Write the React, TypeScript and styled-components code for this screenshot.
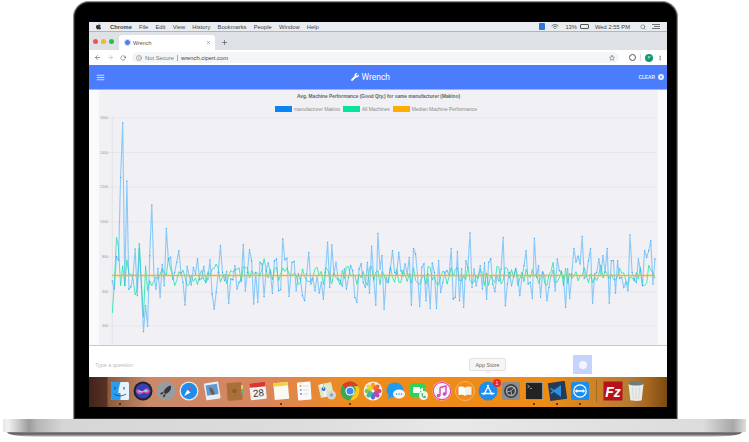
import React from "react";
import styled, { createGlobalStyle } from "styled-components";
import { FaApple, FaWrench } from "react-icons/fa";
import { FiArrowLeft, FiArrowRight, FiRotateCw, FiStar, FiInfo, FiSearch, FiX, FiPlus, FiMenu, FiMoreVertical } from "react-icons/fi";

const GlobalStyle = createGlobalStyle`
  html, body {
    margin: 0;
    padding: 0;
    background: #fff;
    font-family: "Liberation Sans", Arial, sans-serif;
  }
`;

// traced from the chart, y in page pixels once the offset is added
const segA = [516,540,443,453,205,42,530,216,540,533,497,420,560,420,535,668,590,652,440,288,500,540,478,565,466,530,358,453,445,510,490,460,425,490,520,588,472,500,528,475,495,450,512,508,472,520,510,452,555,600,550,490,410,490,515,487,583,510,512,470,540,520,512,407,545,490,422,455,585,490,580,460,465,563,485,463,490,553,455,450,545,542,390,452,448,562];
const segB = [130,127,215,165,180,230,245,165,100,195,180,215,170,222,190,240,160,70,205,78,165,130,180,185,200,150,210,175,140,155,235,250,150,135,190,205,130,222,82,178,258,43,150,110,270,175,190,150,95,160,165,100,155,170,135,165,115,258,88,105,170,262,145,135,245,165,268,132,160,268,125,220,190,160,155,170,88,240,235,98,245,150,265,125,145,42];
const segC = [205,150,200,170,140,210,132,240,130,120,195,218,170,185,150,55,260,195,160,200,175,150,170,230,175,140,95,195,190,238,58,175,140,235,160,170,245,205,170,155,215,120,155,160,175,265,150,238,165,88,128,112,135,52,178,170,125,88,252,165,160,120,165,110,160,88,252,125,125,222,125,178,175,205,190,215,48,160,180,190,120,155,200,95,115,95,65,195,120];
const greenStart = [612,520,385,415,530,470,530,452,495,497,510,558,540,402,520,625,470,545,515,530];

const spread = (ys: number[], from: number, to: number, offset: number) =>
  ys.map((y, i) => ({ x: from + (i * (to - from)) / (ys.length - 1), y: offset + y / 3 }));

const bluePoints = [
  ...spread(segA, 112.3, 289, 110),
  ...spread(segB, 292, 470, 220),
  ...spread(segC, 472, 655, 220),
];

const wobble = (i: number) => {
  const v = Math.sin(i * 12.9898) * 43758.5453;
  return v - Math.floor(v);
};

const greenPoints = bluePoints.map((p, i) => {
  if (i < greenStart.length) return { x: p.x, y: 110 + greenStart[i] / 3 };
  const spike = i % 23 === 4 ? -8 : 0;
  return { x: p.x, y: 277 + (wobble(i) - 0.5) * 20 + spike };
});

const toLine = (pts: { x: number; y: number }[]) =>
  pts.map((p) => `${p.x.toFixed(1)},${p.y.toFixed(1)}`).join(" ");

const gridLines = [
  { y: 119, label: "1600" },
  { y: 153.5, label: "1400" },
  { y: 188, label: "1200" },
  { y: 223, label: "1000" },
  { y: 258, label: "800" },
  { y: 293, label: "600" },
  { y: 327, label: "400" },
];

const menuItems = ["File", "Edit", "View", "History", "Bookmarks", "People", "Window", "Help"];

const Chart = () => (
  <Plot viewBox="99 115 559 231">
    {gridLines.map((g) => (
      <g key={g.y}>
        <line x1="107" x2="656" y1={g.y} y2={g.y} stroke="#e3e3e8" strokeWidth="0.8" />
        <text x="108" y={g.y + 1.2} textAnchor="end" fontSize="3.6" fill="#999">
          {g.label}
        </text>
      </g>
    ))}
    <line x1="112.3" x2="112.3" y1="119" y2="346" stroke="#dcdce1" strokeWidth="0.7" />
    <polyline points={toLine(greenPoints)} fill="none" stroke="rgba(30,230,165,.8)" strokeWidth="1" />
    <polyline points={toLine(bluePoints)} fill="none" stroke="rgba(70,175,250,.6)" strokeWidth="1.1" />
    {bluePoints.map((p, i) => (
      <circle key={i} cx={p.x} cy={p.y} r="0.65" fill="#3aa6f5" />
    ))}
    <line x1="112.3" x2="655" y1="276.5" y2="276.5" stroke="#ffb020" strokeWidth="1.5" />
  </Plot>
);

const dockIcons: { name: string; dot?: boolean; art: React.ReactNode }[] = [
  {
    name: "Finder",
    dot: true,
    art: (
      <>
        <rect x="1" y="1" width="18" height="18" rx="1.5" fill="#e8f2fa" />
        <path d="M1 2.5A1.5 1.5 0 0 1 2.5 1H10.5C9 6 8.5 9 8.3 12H10.5V19H2.5A1.5 1.5 0 0 1 1 17.5Z" fill="#2a9df0" />
        <path d="M5 6v2.5M14 6v2.5" stroke="#1c3f66" strokeWidth="1" />
        <path d="M4 13c3.500 2.500 8.500 2.500 12 0" stroke="#1c3f66" strokeWidth="0.8" fill="none" />
      </>
    ),
  },
  {
    name: "Siri",
    art: (
      <>
        <circle cx="10" cy="10" r="9.500" fill="#20222e" />
        <circle cx="10" cy="10" r="7.500" fill="#3a3fb0" />
        <path d="M3 10c2-5 4 3 7 0s4-4 7 0c-3 5-5 1-7 2s-5 3-7-2Z" fill="#e24aa8" />
        <path d="M5 10c2-2 3 1 5 0s3-2 5 0c-2 2-3 0-5 .8s-3 1-5-.8Z" fill="#6fe3f5" />
      </>
    ),
  },
  {
    name: "Launchpad",
    art: (
      <>
        <circle cx="10" cy="10" r="9.500" fill="#9a9d9f" />
        <path d="M15 4.500c-4 .5-6 3-7.500 6.500l2 2c3.500-1.500 6-3.500 5.500-8.500Z" fill="#34383c" />
        <path d="M7.500 11l-2.500.5-1 2 3-.5M9.500 13l-.5 2.500-2 1 .5-3" fill="#34383c" />
      </>
    ),
  },
  {
    name: "Safari",
    art: (
      <>
        <circle cx="10" cy="10" r="9.500" fill="#e8ecef" />
        <circle cx="10" cy="10" r="8.200" fill="#1f8cf0" />
        <path d="M15 5l-6.500 3.800L10 10Z" fill="#f0453a" />
        <path d="M5 15l3.500-6.200L11.500 11.500Z" fill="#fff" />
      </>
    ),
  },
  {
    name: "Preview",
    art: (
      <>
        <rect x="3" y="1.500" width="14.500" height="17" rx="1" fill="#e9eef4" transform="rotate(-9 10 10)" />
        <rect x="4.500" y="3.500" width="11.500" height="10.500" fill="#5c9bd8" transform="rotate(-9 10 10)" />
        <path d="M7 6l4 2 2 5-3 1-2-4Z" fill="#7a5a3a" />
      </>
    ),
  },
  {
    name: "Contacts",
    art: (
      <>
        <rect x="2" y="1.500" width="15" height="18" rx="1.500" fill="#a9703a" transform="rotate(-4 10 10)" />
        <rect x="16" y="4" width="2" height="4" fill="#e8c74a" />
        <rect x="16" y="8" width="2" height="4" fill="#53b39a" />
        <rect x="7.500" y="8" width="4" height="4" rx="1.500" fill="#8d5b2d" />
      </>
    ),
  },
  {
    name: "Calendar",
    art: (
      <>
        <rect x="2" y="1.500" width="16" height="17" rx="1" fill="#f3f3f3" transform="rotate(-6 10 10)" />
        <rect x="2" y="1.500" width="16" height="4.500" fill="#d9362f" transform="rotate(-6 10 10)" />
        <text x="10.300" y="15.500" fontSize="10" textAnchor="middle" fill="#333" transform="rotate(-6 10 10)">28</text>
      </>
    ),
  },
  {
    name: "Notes",
    dot: true,
    art: (
      <>
        <rect x="3" y="1.500" width="14.500" height="17" fill="#fbfaf2" transform="rotate(-5 10 10)" />
        <rect x="3" y="1.500" width="14.500" height="3.500" fill="#f6cf3a" transform="rotate(-5 10 10)" />
      </>
    ),
  },
  {
    name: "Reminders",
    art: (
      <>
        <rect x="3.500" y="1" width="13.500" height="18" rx="0.800" fill="#fafafa" transform="rotate(-4 10 10)" />
        <circle cx="6.500" cy="5" r="1" fill="#f39a2c" />
        <circle cx="6.800" cy="9" r="1" fill="#39b9e8" />
        <circle cx="7" cy="13" r="1" fill="#d95bd3" />
        <path d="M9 5h5.500M9.200 9h5.500M9.500 13h5" stroke="#bbb" strokeWidth="0.500" />
      </>
    ),
  },
  {
    name: "Maps",
    art: (
      <>
        <path d="M1 4l13-3 3 13-13 3Z" fill="#dbe9c6" />
        <path d="M3 3.500l4-1 3 13-3 .8Z" fill="#f2efe4" />
        <circle cx="6.500" cy="8" r="2" fill="#2a6fd8" />
        <path d="M6.500 2v6" stroke="#e8c33a" strokeWidth="1" />
        <circle cx="14.500" cy="14" r="4.500" fill="#d4d8db" />
        <circle cx="14.500" cy="14" r="1.800" fill="#9ba1a6" />
      </>
    ),
  },
  {
    name: "Chrome",
    dot: true,
    art: (
      <>
        <circle cx="10" cy="10" r="9.500" fill="#3aa757" />
        <path d="M10 .5a9.500 9.500 0 0 1 8.200 4.700H10a4.800 4.800 0 0 0-4.400 2.900L2.400 4.300A9.500 9.500 0 0 1 10 .5Z" fill="#e0392f" />
        <path d="M18.200 5.200A9.500 9.500 0 0 1 10 19.500l4.100-7.100a4.800 4.800 0 0 0 0-7.200Z" fill="#f8c91c" />
        <circle cx="10" cy="10" r="4.600" fill="#fff" />
        <circle cx="10" cy="10" r="3.500" fill="#4285f4" />
      </>
    ),
  },
  {
    name: "Photos",
    art: (
      <>
        <circle cx="10" cy="10" r="9.500" fill="#f4f4f4" />
        <ellipse cx="10" cy="5" rx="2.300" ry="3.500" fill="#f6a21e" />
        <ellipse cx="10" cy="15" rx="2.300" ry="3.500" fill="#5a6fd0" />
        <ellipse cx="5" cy="10" rx="3.500" ry="2.300" fill="#8bc540" />
        <ellipse cx="15" cy="10" rx="3.500" ry="2.300" fill="#e2446a" />
        <ellipse cx="6.500" cy="6.500" rx="2.300" ry="3.500" fill="#e9d52a" transform="rotate(-45 6.500 6.500)" />
        <ellipse cx="13.500" cy="6.500" rx="2.300" ry="3.500" fill="#ef6a2e" transform="rotate(45 13.500 6.500)" />
        <ellipse cx="6.500" cy="13.500" rx="2.300" ry="3.500" fill="#3cb6a5" transform="rotate(45 6.500 13.500)" />
        <ellipse cx="13.500" cy="13.500" rx="2.300" ry="3.500" fill="#a352b5" transform="rotate(-45 13.500 13.500)" />
      </>
    ),
  },
  {
    name: "Messages",
    art: (
      <>
        <ellipse cx="9" cy="9" rx="8.500" ry="7.500" fill="#1e9bf5" />
        <path d="M3 13l-1 5 5-3Z" fill="#1e9bf5" />
        <ellipse cx="13" cy="13" rx="6" ry="4.500" fill="#f4f6f8" />
        <circle cx="10.500" cy="13" r="0.800" fill="#1e9bf5" />
        <circle cx="13" cy="13" r="0.800" fill="#1e9bf5" />
        <circle cx="15.500" cy="13" r="0.800" fill="#1e9bf5" />
      </>
    ),
  },
  {
    name: "FaceTime",
    art: (
      <>
        <rect x="1" y="2" width="15" height="14" rx="3" fill="#2fd35a" />
        <rect x="4" y="6" width="7" height="6" rx="1" fill="#fff" />
        <path d="M11 8.500l3-2v5l-3-2Z" fill="#fff" />
        <circle cx="14.500" cy="14.500" r="4.500" fill="#f2f4f3" />
        <path d="M12.500 12.500c0 3 1.500 4.500 4 4.500l.5-1.500-1.500-.7-.7.7c-.7-.3-1-.8-1.200-1.500l.7-.6-.8-1.500Z" fill="#2fb850" />
      </>
    ),
  },
  {
    name: "iTunes",
    art: (
      <>
        <circle cx="10" cy="10" r="9.500" fill="#f4f4f6" />
        <circle cx="10" cy="10" r="8.700" fill="none" stroke="#e84b9b" strokeWidth="1.200" />
        <path d="M8 6.500l6-1.500v8" stroke="#d94bb5" strokeWidth="1.400" fill="none" />
        <path d="M8 6.500v8" stroke="#d94bb5" strokeWidth="1.400" />
        <circle cx="6.500" cy="14.500" r="1.800" fill="#d94bb5" />
        <circle cx="12.500" cy="13" r="1.800" fill="#c84bd0" />
      </>
    ),
  },
  {
    name: "iBooks",
    art: (
      <>
        <circle cx="10" cy="10" r="9.500" fill="#f08a1d" stroke="#f6d0a0" strokeWidth="0.600" />
        <path d="M3.500 6c2.500-.8 5-.5 6.500.8V15c-1.500-1.200-4-1.500-6.500-.8Z" fill="#fff" />
        <path d="M16.500 6c-2.500-.8-5-.5-6.500.8V15c1.500-1.200 4-1.500 6.500-.8Z" fill="#f4f0ea" />
      </>
    ),
  },
  {
    name: "App Store",
    art: (
      <>
        <circle cx="10" cy="10" r="9.500" fill="#1d8df0" />
        <path d="M10.500 4.500L6 13.500M9.500 4.500L14 13.500M4 12.500h12" stroke="#fff" strokeWidth="1.300" strokeLinecap="round" />
      </>
    ),
  },
  {
    name: "System Preferences",
    art: (
      <>
        <rect x="1" y="1" width="18" height="18" rx="2.500" fill="#8b8d8f" />
        <circle cx="10" cy="10" r="7" fill="#3d4042" />
        <circle cx="10" cy="10" r="4.500" fill="none" stroke="#a9acae" strokeWidth="1.400" />
        <path d="M10 10l4-4M10 10l-5 1M10 10l1 5" stroke="#a9acae" strokeWidth="0.900" />
      </>
    ),
  },
  {
    name: "Terminal",
    dot: true,
    art: (
      <>
        <rect x="1" y="1" width="18" height="18" rx="1" fill="#dcdcdc" />
        <rect x="1.600" y="1.600" width="16.800" height="16.800" fill="#232323" />
        <path d="M3.500 4l2 1.500-2 1.500M6 7.500h2" stroke="#e6e6e6" strokeWidth="0.600" fill="none" />
      </>
    ),
  },
  {
    name: "VS Code",
    dot: true,
    art: (
      <>
        <rect x="2" y="1" width="17" height="18" fill="#243a57" transform="rotate(-8 10 10)" />
        <path d="M14 4v12L7 11l-2.500 2L3 12l3-2-3-2 1.500-1L7 9Z" fill="#2d8fe0" />
      </>
    ),
  },
  {
    name: "TeamViewer",
    dot: true,
    art: (
      <>
        <rect x="1" y="1" width="18" height="18" rx="2" fill="#1a8df0" />
        <circle cx="10" cy="10" r="6.800" fill="#fff" />
        <circle cx="10" cy="10" r="5.600" fill="#1a8df0" />
        <path d="M4.800 10l2.400-2v1.300h5.600V8l2.400 2-2.400 2v-1.300H7.200V12Z" fill="#fff" />
      </>
    ),
  },
];

const App = () => {
  return (
    <Page>
      <GlobalStyle />
      <Lid>
        <Screen>
          <MenuBar>
            <FaApple size={7} color="#333" />
            <AppName>Chrome</AppName>
            {menuItems.map((m) => (
              <MenuItem key={m}>{m}</MenuItem>
            ))}
            <MenuRight>
              <StatusBlue />
              <svg width="8" height="6" viewBox="0 0 8 6">
                <path d="M.5 2a5 5 0 0 1 7 0M1.800 3.300a3.200 3.200 0 0 1 4.400 0M3.200 4.600a1.200 1.200 0 0 1 1.600 0" stroke="#555" strokeWidth=".8" fill="none" />
              </svg>
              <MenuItem>13%</MenuItem>
              <BatteryBox />
              <Clock>Wed 2:55 PM</Clock>
              <FiSearch size={6} color="#555" />
              <svg width="8" height="5" viewBox="0 0 8 5">
                <path d="M0 .5h8M2 2.500h6M0 4.500h8" stroke="#555" strokeWidth=".8" />
              </svg>
            </MenuRight>
          </MenuBar>

          <TabStrip>
            <Lights>
              <Light $color="#f2544d" />
              <Light $color="#f6b32c" />
              <Light $color="#27c23f" />
            </Lights>
            <Tab>
              <Favicon />
              <TabTitle>Wrench</TabTitle>
              <FiX size={5} color="#555" />
            </Tab>
            <NewTab>
              <FiPlus size={7} color="#444" />
            </NewTab>
          </TabStrip>

          <AddressBar>
            <NavIcons>
              <FiArrowLeft size={7} color="#555" />
              <FiArrowRight size={7} color="#b5b5b5" />
              <FiRotateCw size={6} color="#555" />
            </NavIcons>
            <Omnibox>
              <FiInfo size={6} color="#666" />
              <NotSecure>Not Secure</NotSecure>
              <OmniSep />
              <Url>wrench.cipert.com</Url>
              <FiStar size={6} color="#555" />
            </Omnibox>
            <ToolIcons>
              <ExtIcon />
              <ToolSep />
              <Avatar>P</Avatar>
              <FiMoreVertical size={6} color="#555" />
            </ToolIcons>
          </AddressBar>

          <AppHeader>
            <FiMenu size={9} color="#fff" />
            <Brand>
              <FaWrench size={8} color="#fff" />
              Wrench
            </Brand>
            <ClearButton>
              CLEAR
              <ClearDot>
                <FiX size={4} color="#4a7cfc" strokeWidth={4} />
              </ClearDot>
            </ClearButton>
          </AppHeader>

          <Body>
            <ChartPanel>
              <ChartTitle>Avg. Machine Performance (Good Qty.) for same manufacturer (Makino)</ChartTitle>
              <Legend>
                <LegendItem>
                  <Swatch $color="#0a84f5" />
                  manufacturer Makino
                </LegendItem>
                <LegendItem>
                  <Swatch $color="#08e39a" />
                  All Machines
                </LegendItem>
                <LegendItem>
                  <Swatch $color="#ffad00" />
                  Median Machine Performance
                </LegendItem>
              </Legend>
              <Chart />
            </ChartPanel>
          </Body>

          <Composer>
            <Question>Type a question</Question>
            <SendButton>
              <SendDot />
            </SendButton>
          </Composer>

          <Dock>
            <Tooltip>App Store</Tooltip>
            <DockShelf>
              {dockIcons.map((icon) => (
                <DockSlot key={icon.name} title={icon.name}>
                  <svg width="20" height="20" viewBox="0 0 20 20">
                    {icon.art}
                  </svg>
                  {icon.name === "App Store" && <Badge>1</Badge>}
                  {icon.dot && <RunDot />}
                </DockSlot>
              ))}
              <DockDivider />
              <DockSlot title="FileZilla">
                <svg width="20" height="20" viewBox="0 0 20 20">
                  <rect x="0.500" y="0.500" width="19" height="19" fill="#b5121b" />
                  <text x="10" y="15.500" fontSize="14" fontWeight="700" fontStyle="italic" textAnchor="middle" fill="#fff" fontFamily="Liberation Sans, sans-serif">Fz</text>
                </svg>
              </DockSlot>
              <DockSlot title="Trash">
                <svg width="20" height="22" viewBox="0 0 20 22">
                  <ellipse cx="10" cy="3.500" rx="7.500" ry="2.500" fill="#6f7d78" />
                  <path d="M2.500 4l1.800 16c.2 1.200 11.200 1.200 11.400 0L17.500 4c-2 2-13 2-15 0Z" fill="#e9ebea" />
                  <path d="M6.500 7l.7 12M10 7.500v12M13.500 7l-.7 12" stroke="#cfd3d1" strokeWidth=".8" />
                </svg>
              </DockSlot>
            </DockShelf>
          </Dock>
        </Screen>
      </Lid>
      <Base />
      <BaseLip />
    </Page>
  );
};

export default App;

const Page = styled.div`
  width: 749px;
  height: 442px;
  padding-top: 1px;
  box-sizing: border-box;
  display: flex;
  flex-direction: column;
  align-items: center;
  overflow: hidden;
  background: #fff;
`;

const Lid = styled.div`
  width: 605px;
  height: 418px;
  margin-left: 2px;
  box-sizing: border-box;
  padding: 20px 10px 12px 15px;
  background: #000;
  border: 1px solid #8d8d8d;
  border-bottom: 0;
  border-radius: 16px 16px 0 0;
  box-shadow: inset 0 0 0 1px #2b2b2b;
`;

const Screen = styled.div`
  width: 578px;
  height: 385px;
  display: flex;
  flex-direction: column;
  background: #fff;
  overflow: hidden;
`;

const MenuBar = styled.div`
  height: 10px;
  flex: none;
  display: flex;
  align-items: center;
  padding: 0 7px 0 6px;
  background: #e9edf2;
  border-bottom: 1px solid #aeb4bb;
  box-sizing: border-box;
  font-size: 5.800px;
  color: #444;
`;

const AppName = styled.span`
  font-weight: 700;
  margin: 0 7px 0 8px;
`;

const MenuItem = styled.span`
  margin-right: 7.200px;
  white-space: nowrap;
`;

const Clock = styled.span`
  margin-right: 4px;
  white-space: nowrap;
`;

const MenuRight = styled.div`
  margin-left: auto;
  display: flex;
  align-items: center;
  gap: 6px;

  ${MenuItem} {
    margin-right: 0;
  }
`;

const StatusBlue = styled.span`
  width: 6px;
  height: 7px;
  border-radius: 1px;
  background: #2c78d8;
`;

const BatteryBox = styled.span`
  width: 9px;
  height: 5px;
  margin-left: -3px;
  border: 0.500px solid #555;
  border-radius: 1px;
  box-sizing: border-box;
`;

const TabStrip = styled.div`
  height: 18px;
  flex: none;
  display: flex;
  align-items: flex-end;
  background: #dee1e6;
`;

const Lights = styled.div`
  display: flex;
  gap: 3px;
  align-self: flex-start;
  margin: 7px 5px 0 4px;
`;

const Light = styled.span<{ $color: string }>`
  width: 5px;
  height: 5px;
  border-radius: 50%;
  background: ${(p) => p.$color};
`;

const Tab = styled.div`
  width: 96px;
  height: 15px;
  box-sizing: border-box;
  display: flex;
  align-items: center;
  padding: 0 4px 0 5px;
  background: #fff;
  border-radius: 3px 3px 0 0;
`;

const Favicon = styled.span`
  width: 5px;
  height: 5px;
  border-radius: 50%;
  background: #4a7cfc;
  border: 1px solid #d5e0fb;
`;

const TabTitle = styled.span`
  flex: 1;
  margin-left: 2px;
  font-size: 5.400px;
  color: #555;
`;

const NewTab = styled.span`
  align-self: center;
  display: flex;
  margin: 2px 0 0 6px;
`;

const AddressBar = styled.div`
  height: 15px;
  flex: none;
  display: flex;
  align-items: center;
  padding: 0 4px 0 5px;
  background: #fff;
`;

const NavIcons = styled.div`
  width: 38px;
  flex: none;
  display: flex;
  align-items: center;
  gap: 6px;
`;

const Omnibox = styled.div`
  width: 487px;
  height: 11px;
  flex: none;
  box-sizing: border-box;
  display: flex;
  align-items: center;
  padding: 0 4px 0 4px;
  border-radius: 6px;
  background: #f4f5f6;
  font-size: 5.800px;
`;

const NotSecure = styled.span`
  margin-left: 3px;
  color: #777;
`;

const OmniSep = styled.span`
  width: 1px;
  height: 6px;
  margin: 0 3px;
  background: #aaa;
`;

const Url = styled.span`
  flex: 1;
  color: #444;
`;

const ToolIcons = styled.div`
  flex: 1;
  display: flex;
  align-items: center;
  justify-content: flex-end;
  gap: 4px;
`;

const ExtIcon = styled.span`
  width: 5px;
  height: 5px;
  border-radius: 50%;
  background: #fff;
  border: 1px solid #555;
`;

const ToolSep = styled.span`
  width: 1px;
  height: 7px;
  background: #ddd;
`;

const Avatar = styled.span`
  width: 8px;
  height: 8px;
  border-radius: 50%;
  display: flex;
  align-items: center;
  justify-content: center;
  background: #0d9a78;
  color: #fff;
  font-size: 4px;
`;

const AppHeader = styled.div`
  height: 25px;
  flex: none;
  box-sizing: border-box;
  display: flex;
  align-items: center;
  justify-content: space-between;
  padding: 0 3px 0 7px;
  background: #4a7cfc;
  border-bottom: 1px solid #9db6f0;
`;

const Brand = styled.div`
  display: flex;
  align-items: center;
  gap: 2px;
  margin-right: 2px;
  color: #fff;
  font-family: Roboto, "Liberation Sans", sans-serif;
  font-size: 8.500px;
  font-weight: 400;
`;

const ClearButton = styled.div`
  display: flex;
  align-items: center;
  gap: 3px;
  color: #e6edff;
  font-size: 4.800px;
  font-weight: 700;
`;

const ClearDot = styled.span`
  width: 6px;
  height: 6px;
  border-radius: 50%;
  display: flex;
  align-items: center;
  justify-content: center;
  background: #e6edff;
`;

const Body = styled.div`
  height: 256px;
  flex: none;
  box-sizing: border-box;
  padding: 0 9px 0 10px;
  background: #fafafc;
  border-bottom: 1px solid #c9c9cc;
`;

const ChartPanel = styled.div`
  height: 100%;
  display: flex;
  flex-direction: column;
  background: #f0f0f5;
`;

const ChartTitle = styled.div`
  flex: none;
  margin-top: 4px;
  text-align: center;
  font-size: 4.800px;
  font-weight: 700;
  color: #666;
`;

const Legend = styled.div`
  flex: none;
  display: flex;
  justify-content: center;
  gap: 3px;
  margin: 7px 5px 0 0;
  height: 6px;
`;

const LegendItem = styled.div`
  display: flex;
  align-items: center;
  gap: 2px;
  font-size: 4.900px;
  color: #8a8a8a;
`;

const Swatch = styled.span<{ $color: string }>`
  width: 17px;
  height: 6px;
  background: ${(p) => p.$color};
`;

const Plot = styled.svg`
  flex: none;
  width: 559px;
  height: 231px;
  margin-top: auto;
  font-family: "Liberation Sans", sans-serif;
`;

const Composer = styled.div`
  height: 31px;
  flex: none;
  box-sizing: border-box;
  display: flex;
  align-items: center;
  padding: 6px 75px 0 6px;
  justify-content: space-between;
`;

const Question = styled.span`
  font-size: 5.400px;
  color: #bdbdbd;
`;

const SendButton = styled.div`
  width: 19px;
  height: 19px;
  display: flex;
  align-items: center;
  justify-content: center;
  background: #c6d4fb;
`;

const SendDot = styled.span`
  width: 8px;
  height: 8px;
  border-radius: 50%;
  background: #f2f5ff;
`;

const Dock = styled.div`
  position: relative;
  height: 30px;
  flex: none;
  display: flex;
  justify-content: center;
  background: linear-gradient(90deg, #3f2319 0, #5a3226 18px, #8a5a3e 19px, #c98a6a 60px, #d98560 170px, #ee8b1c 260px, #ee8c14 460px, #b57c35 540px, #a5651e 560px, #7a4a12 578px);
`;

const DockShelf = styled.div`
  width: 540px;
  box-sizing: border-box;
  display: flex;
  align-items: center;
  gap: 3px;
  padding: 0 0 2px 2px;
`;

const DockSlot = styled.div`
  position: relative;
  width: 20px;
  height: 26px;
  flex: none;
  display: flex;
  align-items: center;
  justify-content: center;
`;

const DockDivider = styled.span`
  width: 1px;
  height: 22px;
  margin: 0 3px;
  background: rgba(90, 60, 20, 0.35);
`;

const RunDot = styled.span`
  position: absolute;
  left: 9px;
  bottom: -1px;
  width: 2px;
  height: 2px;
  border-radius: 50%;
  background: #222;
`;

const Badge = styled.span`
  position: absolute;
  top: 1px;
  right: -3px;
  width: 8px;
  height: 8px;
  border-radius: 50%;
  display: flex;
  align-items: center;
  justify-content: center;
  background: #e8262a;
  color: #fff;
  font-size: 5px;
`;

const Tooltip = styled.div`
  position: absolute;
  left: 380px;
  top: -19px;
  width: 37px;
  height: 13px;
  box-sizing: border-box;
  display: flex;
  align-items: center;
  justify-content: center;
  background: #f6f6f6;
  border: 1px solid #e2e2e2;
  border-radius: 2px;
  font-size: 5.400px;
  color: #666;

  &::after {
    content: "";
    position: absolute;
    left: 15px;
    bottom: -4px;
    border: 3px solid transparent;
    border-bottom: 0;
    border-top-color: #f0f0f0;
  }
`;

const Base = styled.div`
  width: 743px;
  height: 13px;
  flex: none;
  background: linear-gradient(90deg, #e6e6e6 0, #f2f2f2 5px, #cfcfcf 14px, #9c9c9c 26px, #b5b5b5 34px, #d6d6d6 60px, #dddddd 300px, #e8e8e8 450px, #dcdcdc 700px, #a8a8a8 730px, #dddddd 743px);
`;

const BaseLip = styled.div`
  width: 735px;
  height: 5px;
  flex: none;
  background: linear-gradient(180deg, #8a8a8a 0, #5a5a5a 40%, #a8a8a8 75%, #eeeeee 100%);
  border-radius: 0 0 30px 30px / 0 0 5px 5px;
`;
